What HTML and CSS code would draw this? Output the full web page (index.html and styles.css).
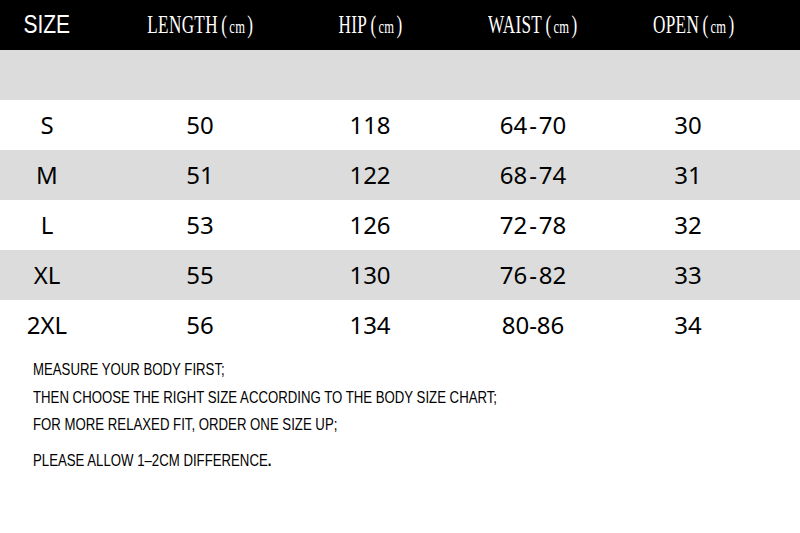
FILE: index.html
```html
<!DOCTYPE html>
<html>
<head>
<meta charset="utf-8">
<link rel="stylesheet" href="styles.css">
</head>
<body>
<div class="chart">
  <div class="row head">
    <div class="cell"><span class="size-label">SIZE</span></div>
    <div class="cell"><span class="hl">LENGTH<span class="unit">(<span class="cm">cm</span>)</span></span></div>
    <div class="cell"><span class="hl">HIP<span class="unit">(<span class="cm">cm</span>)</span></span></div>
    <div class="cell"><span class="hl">WAIST<span class="unit">(<span class="cm">cm</span>)</span></span></div>
    <div class="cell"><span class="hl">OPEN<span class="unit">(<span class="cm">cm</span>)</span></span></div>
    <div class="cell"></div>
  </div>
  <div class="row band"></div>
  <div class="row data">
    <div class="cell">S</div><div class="cell">50</div><div class="cell">118</div><div class="cell">64<span class="dash">-</span>70</div><div class="cell">30</div><div class="cell"></div>
  </div>
  <div class="row data alt">
    <div class="cell">M</div><div class="cell">51</div><div class="cell">122</div><div class="cell">68<span class="dash">-</span>74</div><div class="cell">31</div><div class="cell"></div>
  </div>
  <div class="row data">
    <div class="cell">L</div><div class="cell">53</div><div class="cell">126</div><div class="cell">72<span class="dash">-</span>78</div><div class="cell">32</div><div class="cell"></div>
  </div>
  <div class="row data alt">
    <div class="cell">XL</div><div class="cell">55</div><div class="cell">130</div><div class="cell">76<span class="dash">-</span>82</div><div class="cell">33</div><div class="cell"></div>
  </div>
  <div class="row data">
    <div class="cell">2XL</div><div class="cell">56</div><div class="cell">134</div><div class="cell">80-86</div><div class="cell">34</div><div class="cell"></div>
  </div>
</div>
<div class="notes">
  <p>MEASURE YOUR BODY FIRST;</p>
  <p>THEN CHOOSE THE RIGHT SIZE ACCORDING TO THE BODY SIZE CHART;</p>
  <p>FOR MORE RELAXED FIT, ORDER ONE SIZE UP;</p>
  <p class="last">PLEASE ALLOW 1–2CM DIFFERENCE<b>.</b></p>
</div>
</body>
</html>
```

FILE: styles.css
```css
html, body {
  margin: 0;
  padding: 0;
  background: #fff;
  width: 800px;
  height: 533px;
  overflow: hidden;
}
.chart {
  width: 800px;
}
.row {
  display: grid;
  grid-template-columns: 94px 212px 128px 198px 112px 1fr;
  height: 50px;
  align-items: center;
}
.cell {
  text-align: center;
  white-space: nowrap;
}
.head {
  background: #000;
  color: #fff;
}
.size-label {
  display: inline-block;
  font-family: "Liberation Sans", sans-serif;
  font-size: 25px;
  transform: scaleX(0.84);
  position: relative;
  top: -1px;
}
.hl {
  display: inline-block;
  font-family: "Liberation Serif", serif;
  font-size: 26px;
  transform: scaleX(0.66);
  letter-spacing: 0.5px;
}
.unit {
  margin-left: 5px;
}
.cm {
  font-size: 19px;
  margin: 0 3px;
}
.band {
  background: #dcdcdc;
}
.data {
  font-family: "Noto Sans", sans-serif;
  font-size: 24px;
  color: #000;
}
.data .cell {
  line-height: 50px;
}
.dash {
  margin: 0 2px;
}
.alt {
  background: #dcdcdc;
}
.notes {
  padding: 6px 0 0 33px;
  font-family: "Liberation Sans", sans-serif;
  font-size: 16.5px;
  color: #000;
  transform: scaleX(0.8);
  transform-origin: 33px 0;
}
.notes p {
  margin: 0;
  height: 27.5px;
  line-height: 27.5px;
  white-space: nowrap;
}
.notes p.last {
  margin-top: 8px;
}
```
